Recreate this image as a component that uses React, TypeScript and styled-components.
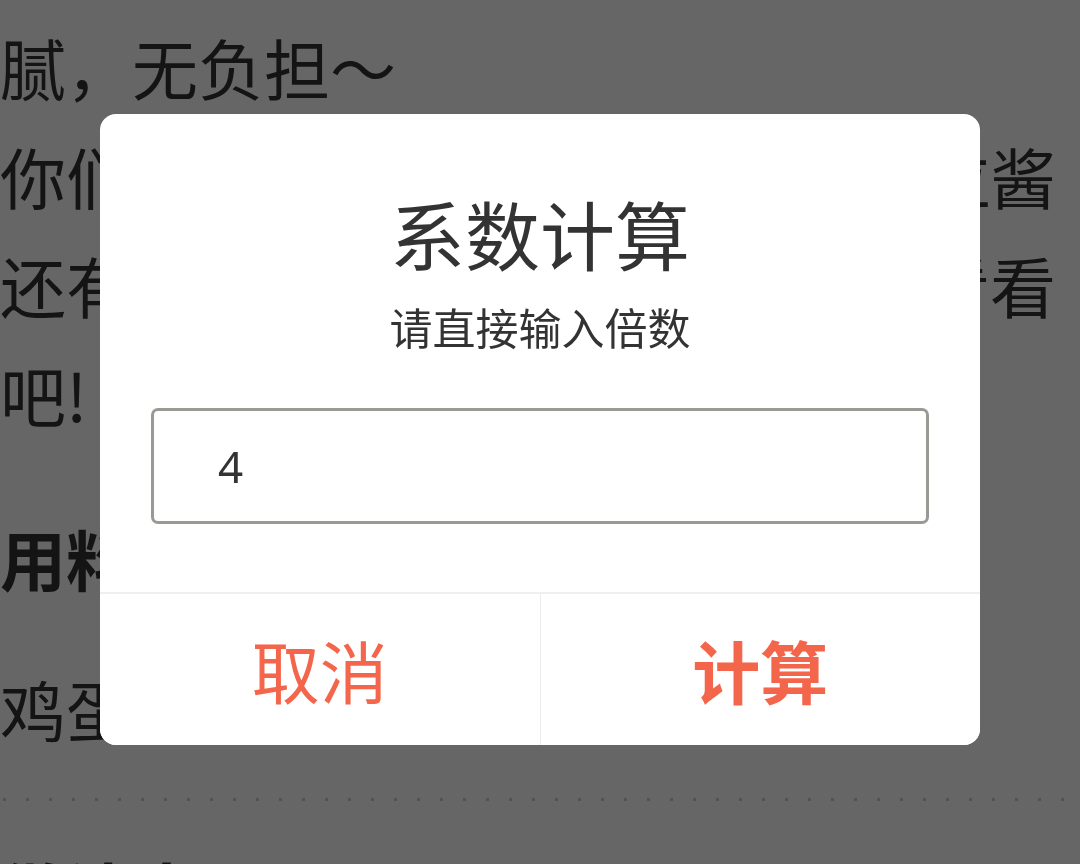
import React from "react";
import styled, { createGlobalStyle } from "styled-components";

const GlobalStyle = createGlobalStyle`
  html, body {
    margin: 0;
    padding: 0;
    height: 100%;
    overflow: hidden;
    background: #fff;
  }
  body {
    font-family: "Noto Sans CJK SC", "Noto Sans", sans-serif;
  }
`;

const Article = styled.article`
  padding-top: 12px;
  color: #333;
  font-size: 66px;
  line-height: 109px;
`;

const Line = styled.div`
  white-space: nowrap;
  overflow: hidden;
`;

const Heading = styled.h3<{ $gap: number }>`
  margin: ${(p) => p.$gap}px 0 0;
  font-size: 66px;
  line-height: 109px;
  font-weight: 700;
  white-space: nowrap;
`;

const Ingredient = styled.div`
  margin-top: 42px;
  white-space: nowrap;
`;

const Dotted = styled.div`
  margin-top: 35px;
  height: 3px;
  background-image: linear-gradient(to right, #cfcfcf 0 3px, transparent 3px);
  background-size: 23px 3px;
  background-position: 3px 0;
`;

const Overlay = styled.div`
  position: fixed;
  inset: 0;
  background: rgba(0, 0, 0, 0.6);
  display: flex;
  justify-content: center;
  align-items: flex-start;
  padding-top: 114px;
`;

const Dialog = styled.div`
  width: 880px;
  background: #fff;
  border-radius: 16px;
  overflow: hidden;
  display: flex;
  flex-direction: column;
`;

const Body = styled.div`
  padding: 75px 51px 68px;
  display: flex;
  flex-direction: column;
  align-items: center;
`;

const Title = styled.h2`
  margin: 0;
  font-size: 75px;
  line-height: 88px;
  font-weight: 400;
  color: #333;
`;

const Subtitle = styled.p`
  margin: 21px 0 0;
  font-size: 43px;
  line-height: 56px;
  color: #333;
`;

const Input = styled.input`
  box-sizing: border-box;
  margin-top: 54px;
  width: 778px;
  height: 116px;
  border: 3px solid #9a9a94;
  border-radius: 7px;
  padding: 0 0 0 64px;
  font-family: "Noto Sans", Roboto, sans-serif;
  font-size: 44px;
  color: #333;
  outline: none;
  background: #fff;
`;

const Footer = styled.div`
  display: flex;
  height: 151px;
  border-top: 2px solid #efefef;
`;

const Action = styled.button<{ $strong?: boolean }>`
  flex: 1;
  border: none;
  background: #fff;
  padding: 0;
  font-family: "Noto Sans CJK SC", sans-serif;
  font-size: 68px;
  font-weight: ${(p) => (p.$strong ? 700 : 400)};
  color: #f4664b;
  cursor: pointer;
  & + & {
    border-left: 1px solid #ececec;
  }
`;

export default function App() {
  return (
    <>
      <GlobalStyle />
      <Article>
        <Line>腻，无负担～</Line>
        <Line>你们也可以根据口味加点番茄沙拉酱</Line>
        <Line>还有其他吃法，大家也快来一起看看</Line>
        <Line>吧!</Line>
        <Heading $gap={55}>用料</Heading>
        <Ingredient>鸡蛋 2个</Ingredient>
        <Dotted />
        <Heading $gap={35}>做法步骤</Heading>
      </Article>
      <Overlay>
        <Dialog>
          <Body>
            <Title>系数计算</Title>
            <Subtitle>请直接输入倍数</Subtitle>
            <Input type="text" defaultValue="4" />
          </Body>
          <Footer>
            <Action>取消</Action>
            <Action $strong>计算</Action>
          </Footer>
        </Dialog>
      </Overlay>
    </>
  );
}
